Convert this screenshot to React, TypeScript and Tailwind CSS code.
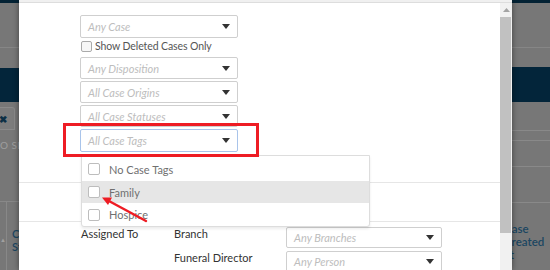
import React from "react";

function Caret() {
  return (
    <svg width="8" height="5" viewBox="0 0 8 5" className="shrink-0">
      <path d="M0 0H8L4 5Z" fill="#333333" />
    </svg>
  );
}

function Select({ label, focused, h }: { label: string; focused?: boolean; h?: string }) {
  return (
    <div
      className={`flex ${h ?? "h-[22px]"} items-center justify-between rounded-[2px] border bg-white pl-[7px] pr-[7px] ${
        focused ? "border-[#a9c4ea]" : "border-[#cfcfcf]"
      }`}
    >
      <span className="text-[11px] italic leading-none text-[#bdbdbd]">{label}</span>
      <Caret />
    </div>
  );
}

function Box() {
  return <span className="h-[12px] w-[12px] shrink-0 rounded-[2px] border border-[#bdbdbd] bg-white" />;
}

export default function App() {
  return (
    <div className="relative h-[270px] w-[550px] overflow-hidden bg-[#777777] [font-family:Lato,sans-serif]">
      {/* page behind the overlay */}
      <div className="flex h-full">
        {/* left strip */}
        <div className="flex w-[19px] shrink-0 flex-col">
          <div className="h-[3px] bg-[#032234]" />
          <div className="h-[45px] border-b border-[#868686]" />
          <div className="h-[20px]" />
          <div className="h-[34px] bg-[#03253a]" />
          <div className="h-[5px]" />
          <div className="flex h-[23px] w-[15px] items-center rounded-tr-[3px] border-r border-b border-t border-[#8a8a8a] bg-[#7c7c7c]">
            <span className="ml-[-1px] text-[10px] font-bold leading-none text-[#0c2f45]">✖</span>
          </div>
          <div className="h-[72px] border-b border-[#888888] pt-[9px]">
            <span className="block whitespace-nowrap text-[10px] leading-[12px] tracking-[0.5px] text-[#9e9e9e]">
              O SEARCH
            </span>
          </div>
          <div className="flex flex-1">
            <div className="flex w-[9px] items-start justify-center border-r border-[#888888] pt-[35px]">
              <span className="text-[6px] leading-none text-[#a0a0a0]">▲</span>
            </div>
            <div className="pl-[5px] pt-[25px]">
              <div className="whitespace-nowrap text-[11px] font-semibold leading-[13px] text-[#1b4661]">Case</div>
              <div className="whitespace-nowrap text-[11px] font-semibold leading-[13px] text-[#1b4661]">Status</div>
            </div>
          </div>
        </div>
        <div className="flex-1" />
        {/* right strip */}
        <div className="flex w-[38px] shrink-0 flex-col">
          <div className="h-[3px] bg-[#032234]" />
          <div className="h-[45px] border-b border-[#868686]" />
          <div className="h-[19px]" />
          <div className="h-[35px] bg-[#03253a]" />
          <div className="h-[29px] border-b border-[#898989]" />
          <div className="h-[10px] border-b border-[#898989]" />
          <div className="h-[26px] border-b border-[#898989]" />
          <div className="h-[36px] border-b border-[#898989]" />
          <div className="ml-[-8px] pt-[19px]">
            <div className="whitespace-nowrap text-[11.5px] font-semibold leading-[13px] text-[#1b4661]">Case</div>
            <div className="whitespace-nowrap text-[11.5px] font-semibold leading-[13px] text-[#1b4661]">Created</div>
            <div className="whitespace-nowrap text-[11.5px] font-semibold leading-[13px] text-[#1b4661]">at</div>
          </div>
        </div>
      </div>

      {/* modal */}
      <div className="absolute left-[19px] top-0 flex h-[270px] w-[493px] flex-col bg-white shadow-[0_0_6px_rgba(0,0,0,0.45)]">
        <div className="h-[3px] shrink-0 border-b border-[#dddddd] bg-[#f0f0f0]" />
        <div className="flex min-h-0 flex-1">
          <div className="relative flex-1 overflow-hidden">
            <div className="flex w-[219px] flex-col pl-[61px] pt-[12px]">
              <Select label="Any Case" h="h-[23px]" />
              <div className="mb-[2px] flex h-[17px] items-center gap-[3px] pl-[1px]">
                <span className="h-[11px] w-[11px] rounded-[2px] border border-[#aaaaaa] bg-[#f7f7f7]" />
                <span className="text-[10.5px] leading-none tracking-[-0.1px] text-[#555555]">Show Deleted Cases Only</span>
              </div>
              <div className="flex flex-col gap-[2px]">
                <Select label="Any Disposition" />
                <Select label="All Case Origins" />
                <Select label="All Case Statuses" />
                <Select label="All Case Tags" focused h="h-[23px]" />
              </div>
            </div>
            <div className="mt-[30px] h-[39px] border-t border-[#e6e6e6]" />
            <div className="flex border-t border-[#e6e6e6] pt-[5px] pl-[62px]">
              <div className="w-[93px] text-[11px] leading-[13px] text-[#333333]">Assigned To</div>
              <div className="flex flex-col gap-[3px]">
                <div className="flex">
                  <div className="w-[112px] text-[11px] leading-[13px] text-[#333333]">Branch</div>
                  <div className="w-[156px]">
                    <Select label="Any Branches" h="h-[21px]" />
                  </div>
                </div>
                <div className="flex">
                  <div className="w-[112px] text-[11px] leading-[13px] text-[#333333]">Funeral Director</div>
                  <div className="w-[156px]">
                    <Select label="Any Person" h="h-[21px]" />
                  </div>
                </div>
              </div>
            </div>

            {/* dropdown list */}
            <div className="absolute left-[62px] top-[152px] flex h-[72px] w-[289px] flex-col rounded-b-[3px] border border-[#dddddd] bg-white pt-[2px] shadow-[0_2px_3px_rgba(0,0,0,0.08)]">
              <div className="flex h-[23px] items-center gap-[9px] pl-[6px]">
                <Box />
                <span className="text-[11px] leading-none text-[#707070]">No Case Tags</span>
              </div>
              <div className="flex h-[23px] items-center gap-[9px] bg-[#e6e6e6] pl-[6px]">
                <Box />
                <span className="text-[11px] leading-none text-[#707070]">Family</span>
              </div>
              <div className="flex h-[23px] items-center gap-[9px] pl-[6px]">
                <Box />
                <span className="text-[11px] leading-none text-[#707070]">Hospice</span>
              </div>
            </div>

            {/* red highlight */}
            <div className="absolute left-[44px] top-[120px] h-[34px] w-[196px] border-[3px] border-[#ee1c24]" />
          </div>
          {/* scrollbar */}
          <div className="flex w-[12px] shrink-0 flex-col bg-[#f1f1f1]">
            <div className="flex h-[14px] items-center justify-center">
              <svg width="7" height="4" viewBox="0 0 7 4">
                <path d="M0 4L3.5 0L7 4Z" fill="#a3a3a3" />
              </svg>
            </div>
            <div className="mr-[1px] h-[216px] bg-[#c1c1c1]" />
          </div>
        </div>
      </div>

      {/* red arrow */}
      <svg className="pointer-events-none absolute left-0 top-0" width="550" height="270">
        <line x1="146" y1="221" x2="108" y2="200.5" stroke="#ee1c24" strokeWidth="2.5" strokeLinecap="round" />
        <polygon points="102,197.5 112,197.5 108,205" fill="#ee1c24" />
      </svg>
    </div>
  );
}
